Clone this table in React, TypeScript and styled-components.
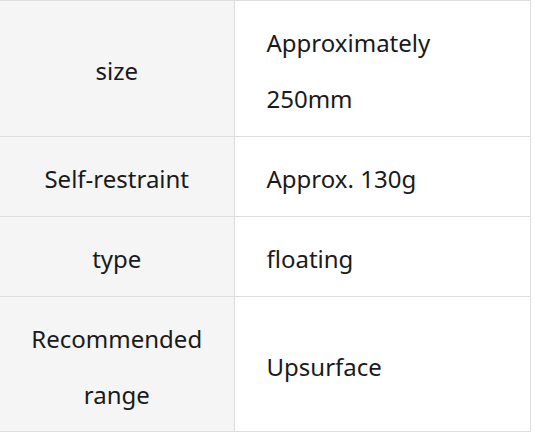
import React from "react";
import styled, { createGlobalStyle } from "styled-components";

const GlobalStyle = createGlobalStyle`
  html, body {
    margin: 0;
    padding: 0;
    background: #ffffff;
  }
  body {
    font-family: "Noto Sans", "Open Sans", sans-serif;
    color: #1a1a1a;
  }
`;

const Table = styled.table`
  border-collapse: collapse;
  width: 531px;
  table-layout: fixed;
  font-size: 24px;
  line-height: 56px;
`;

const Row = styled.tr``;

const HeadCell = styled.th<{ $last?: boolean }>`
  box-sizing: border-box;
  width: 234px;
  background: #f5f5f5;
  font-weight: 400;
  text-align: center;
  vertical-align: middle;
  padding: 14px 8px ${(p) => (p.$last ? "8px" : "9px")};
  border: 1px solid #dedede;
  border-left: none;
`;

const ValueCell = styled.td<{ $last?: boolean }>`
  box-sizing: border-box;
  background: #ffffff;
  text-align: left;
  vertical-align: middle;
  padding: 14px 16px ${(p) => (p.$last ? "8px" : "9px")} 32px;
  border: 1px solid #dedede;
`;

const rows: { label: string; value: string }[] = [
  { label: "size", value: "Approximately 250mm" },
  { label: "Self-restraint", value: "Approx. 130g" },
  { label: "type", value: "floating" },
  { label: "Recommended range", value: "Upsurface" },
];

export default function App() {
  return (
    <>
      <GlobalStyle />
      <Table>
        <tbody>
          {rows.map((r, i) => {
            const last = i === rows.length - 1;
            return (
              <Row key={i}>
                <HeadCell $last={last}>{r.label}</HeadCell>
                <ValueCell $last={last}>{r.value}</ValueCell>
              </Row>
            );
          })}
        </tbody>
      </Table>
    </>
  );
}
